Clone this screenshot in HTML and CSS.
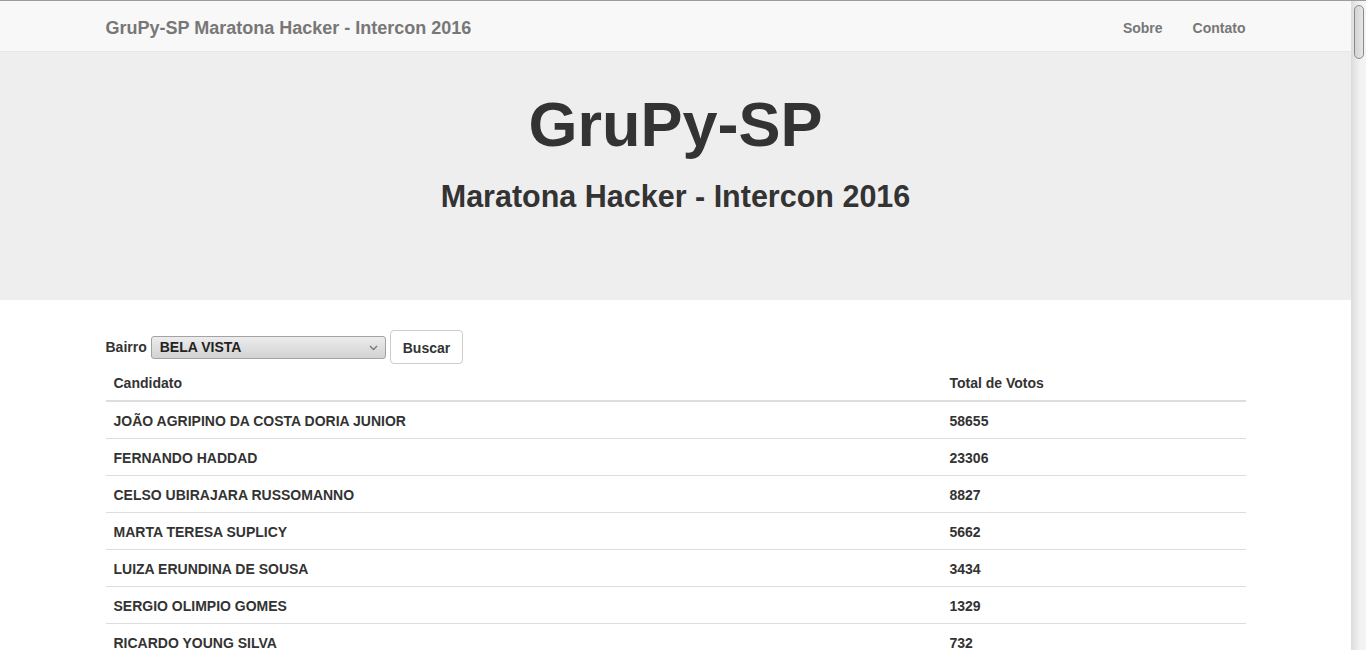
FILE: index.html
```html
<!DOCTYPE html>
<html lang="pt-br">
<head>
<meta charset="utf-8">
<title>GruPy-SP Maratona Hacker - Intercon 2016</title>
<link rel="stylesheet" href="styles.css">
</head>
<body>
<div class="frame">
  <div class="viewport">
    <nav class="navbar">
      <div class="container nav-inner">
        <a class="brand" href="#">GruPy-SP Maratona Hacker - Intercon 2016</a>
        <ul class="nav-links">
          <li><a href="#">Sobre</a></li>
          <li><a href="#">Contato</a></li>
        </ul>
      </div>
    </nav>
    <header class="jumbotron">
      <h1 class="title">GruPy-SP</h1>
      <h2 class="subtitle">Maratona Hacker - Intercon 2016</h2>
    </header>
    <main class="container">
      <form class="search-form">
        <label class="label" for="bairro">Bairro</label>
        <span class="select-wrap">
          <select id="bairro" class="select">
            <option>BELA VISTA</option>
          </select>
          <svg class="chev" width="9" height="6" viewBox="0 0 9 6"><path d="M1 1 L4.5 4.5 L8 1" fill="none" stroke="#777" stroke-width="1.3"/></svg>
        </span>
        <button type="button" class="btn">Buscar</button>
      </form>
      <table class="table">
        <thead>
          <tr><th class="col-name">Candidato</th><th>Total de Votos</th></tr>
        </thead>
        <tbody>
          <tr><td>JOÃO AGRIPINO DA COSTA DORIA JUNIOR</td><td>58655</td></tr>
          <tr><td>FERNANDO HADDAD</td><td>23306</td></tr>
          <tr><td>CELSO UBIRAJARA RUSSOMANNO</td><td>8827</td></tr>
          <tr><td>MARTA TERESA SUPLICY</td><td>5662</td></tr>
          <tr><td>LUIZA ERUNDINA DE SOUSA</td><td>3434</td></tr>
          <tr><td>SERGIO OLIMPIO GOMES</td><td>1329</td></tr>
          <tr><td>RICARDO YOUNG SILVA</td><td>732</td></tr>
        </tbody>
      </table>
    </main>
  </div>
  <div class="scrollbar"><div class="thumb"></div></div>
</div>
</body>
</html>
```
FILE: styles.css
```css
* { box-sizing: border-box; }
html, body { margin: 0; padding: 0; height: 100%; overflow: hidden; }
body {
  font-family: "Liberation Sans", Arial, sans-serif;
  font-size: 14px;
  line-height: 20px;
  font-weight: bold;
  color: #333;
  background: #fff;
}
.frame {
  display: flex;
  height: 650px;
  border-top: 1px solid #9c9c9c;
}
.viewport { flex: 1; min-width: 0; overflow: hidden; }
.container { width: 1170px; margin: 0 auto; padding: 0 15px; }

.navbar {
  height: 51px;
  background: #f8f8f8;
  border-bottom: 1px solid #e7e7e7;
}
.nav-inner { display: flex; justify-content: space-between; align-items: center; height: 50px; padding-top: 4px; }
.brand {
  color: #777;
  font-size: 18px;
  line-height: 20px;
  text-decoration: none;
}
.nav-links { list-style: none; margin: 0 -15px 0 0; padding: 0; display: flex; }
.nav-links a {
  display: block;
  padding: 15px;
  color: #777;
  text-decoration: none;
}

.jumbotron {
  background: #eee;
  height: 248px;
  padding-top: 38px;
  margin-bottom: 30px;
  text-align: center;
}
.title {
  margin: 0;
  font-size: 63px;
  line-height: 69px;
  font-weight: bold;
}
.subtitle {
  margin: 21px 0 0;
  font-size: 30.5px;
  line-height: 33px;
  font-weight: bold;
}

.search-form { display: flex; align-items: center; height: 34px; }
.label { margin-right: 4px; }
.select-wrap { position: relative; display: inline-block; }
.select {
  -webkit-appearance: none;
  appearance: none;
  width: 235px;
  height: 23px;
  border: 1px solid #a3a3a3;
  border-radius: 3px;
  background: linear-gradient(#ececec, #d2d2d2);
  font-family: inherit;
  font-weight: bold;
  font-size: 14px;
  color: #222;
  padding: 0 0 0 8px;
  margin: 0;
  display: block;
}
.chev { position: absolute; right: 8px; top: 9px; }
.btn {
  margin-left: 4px;
  height: 34px;
  padding: 7px 12px 5px;
  background: #fff;
  border: 1px solid #ccc;
  border-radius: 4px;
  font-family: inherit;
  font-weight: bold;
  font-size: 14px;
  color: #333;
}

.table {
  width: 100%;
  border-collapse: collapse;
}
.table th, .table td {
  text-align: left;
  padding: 9px 8px 7px;
  line-height: 20px;
}
.table th { border-bottom: 2px solid #ddd; }
.table td { border-top: 1px solid #ddd; }
.col-name { width: 836px; }

.scrollbar {
  width: 15px;
  flex: none;
  background: linear-gradient(to right, #dcdcdc, #f2f2f2 60%, #f4f4f4);
  padding: 4px 2px 0 3px;
}
.thumb {
  height: 54px;
  border: 1px solid #8a8a8a;
  border-radius: 5px;
  background: linear-gradient(to right, #d4d4d4, #e6e6e6);
}
```
